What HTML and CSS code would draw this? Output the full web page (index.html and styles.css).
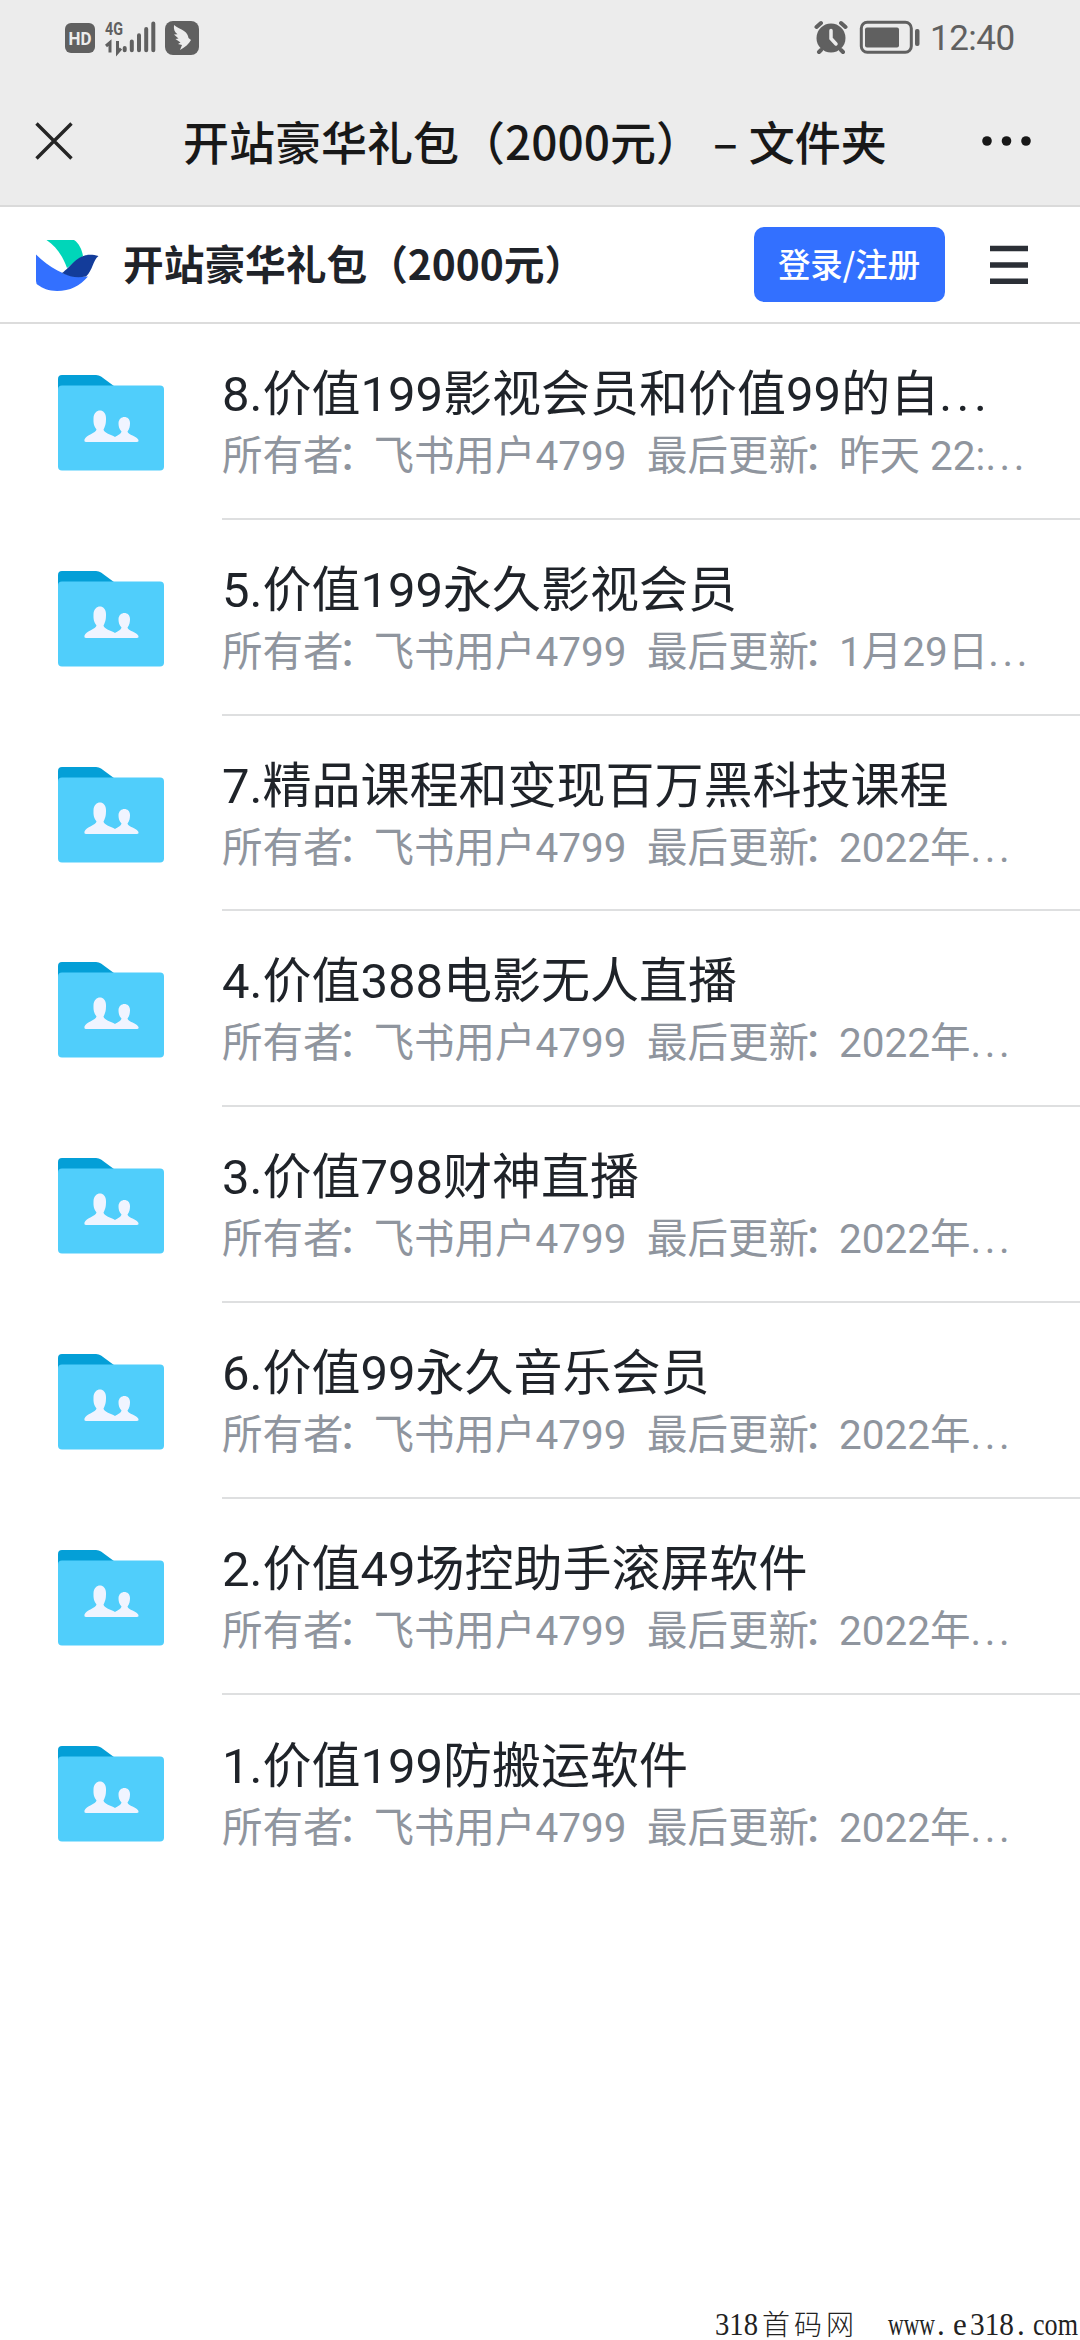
FILE: index.html
```html
<!DOCTYPE html>
<html lang="zh-CN">
<head>
<meta charset="utf-8">
<title>开站豪华礼包（2000元） – 文件夹</title>
<link rel="stylesheet" href="styles.css">
</head>
<body>
<header class="top">
  <div class="status">
    <svg class="status-left" width="140" height="40" viewBox="0 0 140 40" fill="#606060">
      <rect x="0" y="5" width="30" height="30" rx="6"/>
      <text x="3.500" y="27" class="hd" textLength="23" lengthAdjust="spacingAndGlyphs">HD</text>
      <text x="40" y="17" class="net" textLength="18" lengthAdjust="spacingAndGlyphs">4G</text>
      <path d="M41 28l4-3.500v10M52.500 23v11.500l3.500-4" fill="none" stroke="#606060" stroke-width="3"/>
      <g stroke="#606060" stroke-width="4" stroke-linecap="round"><path d="M59.700 30v2.300M66.800 23.500v8.800M74 17.300v15M81.200 11v21.300M88.300 5.500v26.800"/></g>
      <rect x="100" y="3" width="34" height="34" rx="8"/>
      <path fill="#ececec" d="M109 7c3 3 7 3.500 10 6c3 2 4 4 4.500 7l2.500 2c-2 4-6 7-11 10l2-5-4-1 2.500-1.500-5-3.500 3-.5-4.500-4 3.500-.3c-3-2-4-5-3.500-9.200z"/>
    </svg>
    <div class="status-right">
      <svg width="106" height="40" viewBox="0 0 106 40" fill="#606060">
        <circle cx="17" cy="20" r="14.500"/>
        <path d="M2.500 9l4.500-4M27 5l4.500 4M7 32l-2 2M27 32l2 2" stroke="#606060" stroke-width="4" stroke-linecap="round"/>
        <path d="M17 12.500v8l5 5.500" fill="none" stroke="#ececec" stroke-width="3.500" stroke-linecap="round"/>
        <rect x="47.300" y="4.300" width="50" height="30" rx="6" fill="none" stroke="#606060" stroke-width="3"/>
        <rect x="51" y="9.500" width="34" height="20" rx="2"/>
        <rect x="101" y="11" width="4.500" height="17" rx="2"/>
      </svg>
      <span class="time">12:40</span>
    </div>
  </div>
  <div class="nav">
    <svg width="38" height="38" viewBox="0 0 38 38"><path d="M1.500 1.500l35 35M36.500 1.500l-35 35" stroke="#252525" stroke-width="3.400"/></svg>
    <h1 class="nav-title">开站豪华礼包（2000元）<span class="dash">–</span>文件夹</h1>
    <svg width="50" height="10" viewBox="0 0 50 10" fill="#181818"><circle cx="5" cy="5" r="4.800"/><circle cx="24.500" cy="5" r="4.800"/><circle cx="44" cy="5" r="4.800"/></svg>
  </div>
</header>
<div class="appbar">
  <svg class="logo" width="64" height="54" viewBox="0 0 64 54">
    <path fill="#00d6b9" d="M10.500 2H38C43 5 46 12 47 18L31 30C27 19 21 9 10.500 2z"/>
    <path fill="#3370ff" d="M0 16.500C15 31 32 41 52 38.500C44 48 34 53 21 53C13 53 6 50 2 47Q0 46 0 43z"/>
    <path fill="#133c9a" d="M26 35C36 28 43 12 62.500 18C57 22 57 32 50 38.500C41 40 34 39 26 35z"/>
  </svg>
  <div class="app-title">开站豪华礼包（2000元）</div>
  <button class="login">登录/注册</button>
  <svg class="menu" width="38" height="40" viewBox="0 0 38 40"><path d="M0 3.500h38M0 20h38M0 36.300h38" stroke="#2b2f36" stroke-width="5.500"/></svg>
</div>
<svg width="0" height="0" class="defs">
  <symbol id="folder" viewBox="0 0 106 96">
    <path fill="#049fd7" d="M0 20V4Q0 0 4 0H38Q41 0 43 1.500L60 14V20z"/>
    <rect y="10.500" width="106" height="85" rx="4" fill="#50cefb"/>
    <path fill="#f0f4ff" d="M28 67Q26 67 26.500 64.500C28 60 38 58 38.500 54.500C35 50 35.500 46 35.500 43C36 33 48 33 48 43C48 47 48 50 45.500 54.500C46 58 53 59.500 57 62C60 60 63 59 63.500 56.500C61 54 60.500 51 60.500 48C61 40 72 40 72 48C72 51 71.500 54 69.500 56.500C70 60 79 61 80.500 65Q81 67 79 67z"/>
  </symbol>
</svg>
<main class="list">
  <div class="row"><svg class="folder"><use href="#folder"/></svg><div class="info"><div class="name">8.价值199影视会员和价值99的自<span class="dots">...</span></div><div class="meta">所有者<i>：</i>飞书用户4799<b></b>最后更新<i>：</i>昨天 22:<span class="dots">...</span></div></div></div>
  <div class="row"><svg class="folder"><use href="#folder"/></svg><div class="info"><div class="name">5.价值199永久影视会员</div><div class="meta">所有者<i>：</i>飞书用户4799<b></b>最后更新<i>：</i>1月29日<span class="dots">...</span></div></div></div>
  <div class="row"><svg class="folder"><use href="#folder"/></svg><div class="info"><div class="name">7.精品课程和变现百万黑科技课程</div><div class="meta">所有者<i>：</i>飞书用户4799<b></b>最后更新<i>：</i>2022年<span class="dots">...</span></div></div></div>
  <div class="row"><svg class="folder"><use href="#folder"/></svg><div class="info"><div class="name">4.价值388电影无人直播</div><div class="meta">所有者<i>：</i>飞书用户4799<b></b>最后更新<i>：</i>2022年<span class="dots">...</span></div></div></div>
  <div class="row"><svg class="folder"><use href="#folder"/></svg><div class="info"><div class="name">3.价值798财神直播</div><div class="meta">所有者<i>：</i>飞书用户4799<b></b>最后更新<i>：</i>2022年<span class="dots">...</span></div></div></div>
  <div class="row"><svg class="folder"><use href="#folder"/></svg><div class="info"><div class="name">6.价值99永久音乐会员</div><div class="meta">所有者<i>：</i>飞书用户4799<b></b>最后更新<i>：</i>2022年<span class="dots">...</span></div></div></div>
  <div class="row"><svg class="folder"><use href="#folder"/></svg><div class="info"><div class="name">2.价值49场控助手滚屏软件</div><div class="meta">所有者<i>：</i>飞书用户4799<b></b>最后更新<i>：</i>2022年<span class="dots">...</span></div></div></div>
  <div class="row"><svg class="folder"><use href="#folder"/></svg><div class="info"><div class="name">1.价值199防搬运软件</div><div class="meta">所有者<i>：</i>飞书用户4799<b></b>最后更新<i>：</i>2022年<span class="dots">...</span></div></div></div>
</main>
<footer class="mark">
  <svg width="370" height="40" viewBox="0 0 370 40">
    <text x="5" y="35" textLength="43" lengthAdjust="spacingAndGlyphs">318</text>
    <text x="52" y="35" class="cn" textLength="92">首码网</text>
    <text x="178" y="35" textLength="47" lengthAdjust="spacingAndGlyphs">www</text>
    <text x="227" y="35">.</text>
    <text x="243" y="35">e</text>
    <text x="260" y="35" textLength="44" lengthAdjust="spacingAndGlyphs">318</text>
    <text x="307" y="35">.</text>
    <text x="323" y="35" textLength="45" lengthAdjust="spacingAndGlyphs">com</text>
  </svg>
</footer>
</body>
</html>
```
FILE: styles.css
```css
* { box-sizing: border-box; }
body { margin: 0; width: 1080px; height: 2340px; display: flex; flex-direction: column; background: #fff; color: #1f2329; font-family: Roboto, "Noto Sans CJK SC", sans-serif; overflow: hidden; }
.top { height: 207px; background: #ececec; border-bottom: 2px solid #dadada; flex: none; }
.status { height: 76px; padding: 18px 65px; display: flex; justify-content: space-between; }
.hd { font: 700 19px Roboto, sans-serif; fill: #ececec; }
.net { font: 700 18px Roboto, sans-serif; }
.status-right { display: flex; align-items: center; gap: 10px; }
.time { font-size: 35px; line-height: 40px; padding-top: 2px; color: #606060; width: 85px; letter-spacing: -0.5px; white-space: nowrap; }
.nav { height: 129px; padding: 0 48px 0 35px; display: flex; align-items: center; }
.nav-title { flex: 1; margin: 0; padding: 0 0 2px 110px; font: 500 46px/60px "Noto Sans CJK SC", sans-serif; color: #181818; white-space: nowrap; }
.dash { margin: 0 11px 0 11px; }
.appbar { height: 117px; padding: 0 52px 0 36px; display: flex; align-items: center; border-bottom: 2px solid #dcdcdc; flex: none; }
.app-title { margin-left: 23px; padding-bottom: 4px; flex: 1; font: 700 40.7px/56px "Noto Sans CJK SC", sans-serif; white-space: nowrap; }
.login { width: 191px; height: 75px; border: 0; padding: 0 0 3px; border-radius: 10px; background: #3370ff; color: #fff; font: 500 32.4px/72px "Noto Sans CJK SC", sans-serif; margin-right: 45.5px; }
.defs { position: absolute; }
.list { display: flex; flex-direction: column; }
.row { height: 195.8px; display: flex; padding-left: 58px; flex: none; }
.folder { width: 106px; height: 96px; margin: 51px 58px 0 0; flex: none; }
.info { flex: 1; border-bottom: 2px solid #dedfe0; padding-top: 38px; white-space: nowrap; }
.row:last-child .info { border: 0; padding-top: 39px; }
.name { font-size: 49px; line-height: 66px; }
.meta { font-size: 40.5px; line-height: 57px; color: #8f959e; }
.meta i { display: inline-block; width: 36px; margin-left: -6px; font-style: normal; font-feature-settings: "halt"; }
.meta b { display: inline-block; width: 20.5px; }
.dots { letter-spacing: 3.5px; }
.name .dots { letter-spacing: 4.5px; }
.mark { margin-top: auto; height: 40px; display: flex; justify-content: flex-end; }
.mark text { font: 31px "Liberation Serif", serif; fill: #222; }
.mark .cn { font: 300 28px "Noto Sans CJK SC", sans-serif; }
```
